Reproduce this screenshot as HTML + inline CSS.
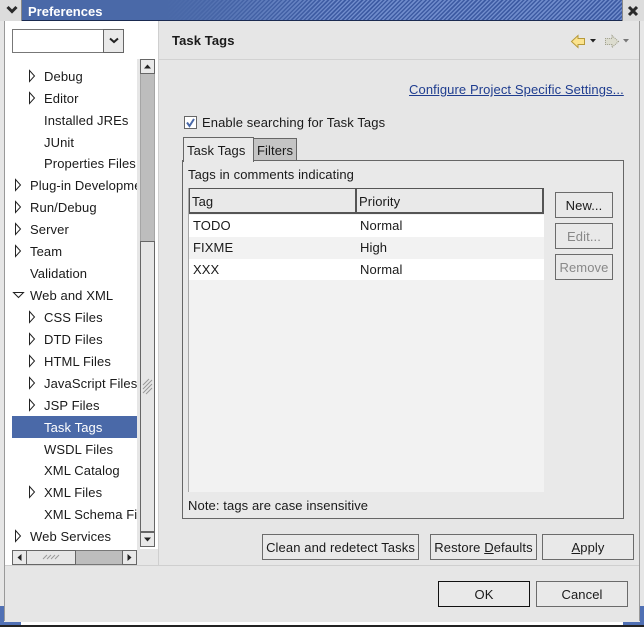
<!DOCTYPE html>
<html><head><meta charset="utf-8">
<style>
html,body{margin:0;padding:0;width:644px;height:627px;overflow:hidden;background:#e6e6e6}
*{box-sizing:border-box}
.a{position:absolute}
.t{position:absolute;margin-top:1px;font:13px/16px "Liberation Sans",sans-serif;color:#1a1a1a;white-space:nowrap;letter-spacing:.1px}
.b{position:absolute;border:1px solid #6b6b6b;background:#e9e9e9;font:13px/16px "Liberation Sans",sans-serif;color:#1a1a1a;text-align:center;letter-spacing:.1px;white-space:nowrap}
</style></head><body>
<div class="a" style="left:0;top:0;width:644px;height:627px;background:#e6e6e6"></div>

<!-- title bar -->
<div class="a" style="left:22px;top:0;width:600px;height:21px;background:repeating-linear-gradient(135deg,#3d5ba3 0 1.5px,#6f8bcb 1.5px 3px);border-bottom:1px solid #1a2a50"></div>
<div class="a" style="left:22px;top:0;width:320px;height:20px;background:linear-gradient(90deg,#4a69a8,#4a69a8 45%,rgba(74,105,168,0))"></div>
<div class="t" style="left:28px;top:3px;color:#fff;font-weight:bold;letter-spacing:0">Preferences</div>
<div class="a" style="left:0;top:0;width:22px;height:21px;background:#dcdcdc;border-right:1px solid #888"></div>
<svg class="a" style="left:6px;top:5px" width="12" height="10"><path d="M1.5 2 L6 6.5 L10.5 2" fill="none" stroke="#2a2a2a" stroke-width="3"/></svg>
<div class="a" style="left:622px;top:0;width:22px;height:21px;background:#dcdcdc;border-left:1px solid #888"></div>
<svg class="a" style="left:627px;top:5px" width="12" height="12"><path d="M2 2 L10 10 M10 2 L2 10" fill="none" stroke="#2a2a2a" stroke-width="3"/></svg>

<!-- frame -->
<div class="a" style="left:4px;top:21px;width:1px;height:600px;background:#999"></div>
<div class="a" style="left:639px;top:21px;width:1px;height:600px;background:#999"></div>
<div class="a" style="left:0;top:622px;width:644px;height:3px;background:#fff"></div>
<div class="a" style="left:0;top:625px;width:644px;height:2px;background:#222"></div>
<div class="a" style="left:0;top:606px;width:4px;height:19px;background:#5070b4"></div>
<div class="a" style="left:0;top:622px;width:21px;height:3px;background:#5070b4"></div>
<div class="a" style="left:640px;top:606px;width:4px;height:19px;background:#5070b4"></div>
<div class="a" style="left:623px;top:622px;width:21px;height:3px;background:#5070b4"></div>

<!-- left pane -->
<div class="a" style="left:5px;top:21px;width:153px;height:544px;background:#fff"></div>
<div class="a" style="left:137px;top:59px;width:3px;height:506px;background:#e6e6e6"></div>
<div class="a" style="left:137px;top:549px;width:21px;height:16px;background:#e6e6e6"></div>
<div class="a" style="left:158px;top:21px;width:1px;height:544px;background:#cfcfcf"></div>
<div class="a" style="left:159px;top:59px;width:480px;height:1px;background:#d2d2d2"></div>
<div class="a" style="left:5px;top:565px;width:634px;height:1px;background:#cfcfcf"></div>

<!-- filter combo -->
<div class="a" style="left:12px;top:29px;width:92px;height:24px;border:1px solid #777;background:#fff"></div>
<div class="a" style="left:103px;top:29px;width:21px;height:24px;border:1px solid #666;background:#e9e9e9"></div>
<svg class="a" style="left:109px;top:37px" width="10" height="8"><path d="M1 1.5 L5 5 L9 1.5" fill="none" stroke="#222" stroke-width="2"/></svg>

<!-- selected row -->
<div class="a" style="left:12px;top:416px;width:125px;height:22px;background:#4a69a8"></div>

<!-- tree text -->
<div class="a" style="left:12px;top:60px;width:125px;height:489px;overflow:hidden">
<div class="t" style="left:32px;top:8px">Debug</div>
<div class="t" style="left:32px;top:30px">Editor</div>
<div class="t" style="left:32px;top:52px">Installed JREs</div>
<div class="t" style="left:32px;top:74px">JUnit</div>
<div class="t" style="left:32px;top:95px">Properties Files</div>
<div class="t" style="left:18px;top:117px">Plug-in Development</div>
<div class="t" style="left:18px;top:139px">Run/Debug</div>
<div class="t" style="left:18px;top:161px">Server</div>
<div class="t" style="left:18px;top:183px">Team</div>
<div class="t" style="left:18px;top:205px">Validation</div>
<div class="t" style="left:18px;top:227px">Web and XML</div>
<div class="t" style="left:32px;top:249px">CSS Files</div>
<div class="t" style="left:32px;top:271px">DTD Files</div>
<div class="t" style="left:32px;top:293px">HTML Files</div>
<div class="t" style="left:32px;top:315px">JavaScript Files</div>
<div class="t" style="left:32px;top:337px">JSP Files</div>
<div class="t" style="left:32px;top:359px;color:#fff">Task Tags</div>
<div class="t" style="left:32px;top:381px">WSDL Files</div>
<div class="t" style="left:32px;top:402px">XML Catalog</div>
<div class="t" style="left:32px;top:424px">XML Files</div>
<div class="t" style="left:32px;top:446px">XML Schema Files</div>
<div class="t" style="left:18px;top:468px">Web Services</div>
</div>

<!-- tree arrows -->
<svg class="a" style="left:0;top:0" width="160" height="560">
<g fill="#fff" stroke="#222" stroke-width="1">
<path d="M29.5 70.5 L34.5 76 L29.5 81.5Z"/>
<path d="M29.5 92.5 L34.5 98 L29.5 103.5Z"/>
<path d="M15.5 179.5 L20.5 185 L15.5 190.5Z"/>
<path d="M15.5 201.5 L20.5 207 L15.5 212.5Z"/>
<path d="M15.5 223.5 L20.5 229 L15.5 234.5Z"/>
<path d="M15.5 245.5 L20.5 251 L15.5 256.5Z"/>
<path d="M13.5 292.5 L23.5 292.5 L18.5 297.5Z"/>
<path d="M29.5 311.5 L34.5 317 L29.5 322.5Z"/>
<path d="M29.5 333.5 L34.5 339 L29.5 344.5Z"/>
<path d="M29.5 355.5 L34.5 361 L29.5 366.5Z"/>
<path d="M29.5 377.5 L34.5 383 L29.5 388.5Z"/>
<path d="M29.5 399.5 L34.5 405 L29.5 410.5Z"/>
<path d="M29.5 486.5 L34.5 492 L29.5 497.5Z"/>
<path d="M15.5 530.5 L20.5 536 L15.5 541.5Z"/>
</g>
</svg>

<!-- vertical scrollbar -->
<div class="a" style="left:140px;top:59px;width:15px;height:488px;background:#bdbdbd;border:1px solid #a5a5a5;border-width:0 1px"></div>
<div class="a" style="left:140px;top:59px;width:15px;height:15px;background:#e9e9e9;border:1px solid #666"></div>
<svg class="a" style="left:143px;top:63px" width="9" height="7"><path d="M4.5 1.5 L8 5.5 L1 5.5Z" fill="#222"/></svg>
<div class="a" style="left:140px;top:241px;width:15px;height:291px;background:#e6e6e6;border:1px solid #666"></div>
<svg class="a" style="left:142px;top:378px" width="11" height="18"><path d="M1 7 L7 1 M1 11 L10 2 M1 15 L10 6 M4 16 L10 10" stroke="#999" stroke-width="1" fill="none"/></svg>
<div class="a" style="left:140px;top:532px;width:15px;height:15px;background:#e9e9e9;border:1px solid #666"></div>
<svg class="a" style="left:143px;top:536px" width="9" height="7"><path d="M1 1.5 L8 1.5 L4.5 5.5Z" fill="#222"/></svg>

<!-- horizontal scrollbar -->
<div class="a" style="left:12px;top:550px;width:125px;height:15px;background:#bdbdbd;border:1px solid #777;border-width:1px 0"></div>
<div class="a" style="left:12px;top:550px;width:15px;height:15px;background:#e9e9e9;border:1px solid #666"></div>
<svg class="a" style="left:16px;top:553px" width="7" height="9"><path d="M1.5 4.5 L5.5 1 L5.5 8Z" fill="#222"/></svg>
<div class="a" style="left:26px;top:550px;width:50px;height:15px;background:#e6e6e6;border:1px solid #666"></div>
<svg class="a" style="left:42px;top:553px" width="18" height="8"><path d="M1 6 L5 2 M5 6 L9 2 M9 6 L13 2 M13 6 L17 2" stroke="#999" fill="none"/></svg>
<div class="a" style="left:122px;top:550px;width:15px;height:15px;background:#e9e9e9;border:1px solid #666"></div>
<svg class="a" style="left:126px;top:553px" width="7" height="9"><path d="M1.5 1 L5.5 4.5 L1.5 8Z" fill="#222"/></svg>

<!-- header -->
<div class="t" style="left:172px;top:32px;font-weight:bold">Task Tags</div>
<svg class="a" style="left:570px;top:33px" width="62" height="16">
<path d="M1.5 8.5 L8 2.5 L8 5.5 L14.5 5.5 L14.5 11.5 L8 11.5 L8 14.5Z" fill="#fbe38e" stroke="#b79a3a"/>
<path d="M20 6 L26 6 L23 9.5Z" fill="#222"/>
<path d="M48.5 8.5 L42 2.5 L42 5.5 L35.5 5.5 L35.5 11.5 L42 11.5 L42 14.5Z" fill="#dcdccf" stroke="#9a9a85" stroke-dasharray="1 1"/>
<path d="M53 6 L59 6 L56 9.5Z" fill="#777"/>
</svg>

<div class="t" style="left:409px;top:81px;color:#1f3d8f;text-decoration:underline">Configure Project Specific Settings...</div>

<!-- checkbox -->
<div class="a" style="left:184px;top:116px;width:13px;height:13px;background:#fff;border:1px solid #666"></div>
<svg class="a" style="left:184px;top:116px" width="13" height="13"><path d="M3 6.5 L5.5 10 L10 3" fill="none" stroke="#4a69a8" stroke-width="2"/></svg>
<div class="t" style="left:202px;top:114px">Enable searching for Task Tags</div>

<!-- tab folder -->
<div class="a" style="left:182px;top:160px;width:442px;height:359px;border:1px solid #666;background:#e9e9e9"></div>
<div class="a" style="left:253px;top:138px;width:44px;height:23px;border:1px solid #666;background:#c4c4c4"></div>
<div class="a" style="left:183px;top:137px;width:71px;height:25px;border:1px solid #666;border-bottom:0;background:#e9e9e9"></div>
<div class="t" style="left:187px;top:142px">Task Tags</div>
<div class="t" style="left:257px;top:142px">Filters</div>

<div class="t" style="left:188px;top:166px">Tags in comments indicating</div>

<!-- table -->
<div class="a" style="left:188px;top:188px;width:356px;height:304px;background:#f2f2f2"></div>
<div class="a" style="left:189px;top:215px;width:355px;height:22px;background:#fff"></div>
<div class="a" style="left:189px;top:259px;width:355px;height:21px;background:#fff"></div>
<div class="a" style="left:188px;top:188px;width:1px;height:304px;background:#a8a8a8"></div>
<div class="a" style="left:189px;top:188px;width:168px;height:26px;border:1px solid #555;background:#e9e9e9;border-width:1px 2px 2px 1px"></div>
<div class="a" style="left:356px;top:188px;width:188px;height:26px;border:1px solid #555;background:#e9e9e9;border-width:1px 2px 2px 1px"></div>
<div class="t" style="left:192px;top:193px">Tag</div>
<div class="t" style="left:359px;top:193px">Priority</div>
<div class="t" style="left:193px;top:217px">TODO</div>
<div class="t" style="left:360px;top:217px">Normal</div>
<div class="t" style="left:193px;top:239px">FIXME</div>
<div class="t" style="left:360px;top:239px">High</div>
<div class="t" style="left:193px;top:261px">XXX</div>
<div class="t" style="left:360px;top:261px">Normal</div>

<div class="t" style="left:188px;top:497px">Note: tags are case insensitive</div>

<!-- side buttons -->
<div class="b" style="left:555px;top:192px;width:58px;height:26px;line-height:26px">New...</div>
<div class="b" style="left:555px;top:223px;width:58px;height:26px;line-height:26px;color:#888">Edit...</div>
<div class="b" style="left:555px;top:254px;width:58px;height:26px;line-height:26px;color:#888">Remove</div>

<!-- lower buttons -->
<div class="b" style="left:262px;top:534px;width:157px;height:26px;line-height:25px">Clean and redetect Tasks</div>
<div class="b" style="left:430px;top:534px;width:107px;height:26px;line-height:25px">Restore <u>D</u>efaults</div>
<div class="b" style="left:542px;top:534px;width:92px;height:26px;line-height:25px"><u>A</u>pply</div>
<div class="b" style="left:438px;top:581px;width:92px;height:26px;line-height:25px;border-color:#111">OK</div>
<div class="b" style="left:536px;top:581px;width:92px;height:26px;line-height:25px">Cancel</div>
</body></html>
